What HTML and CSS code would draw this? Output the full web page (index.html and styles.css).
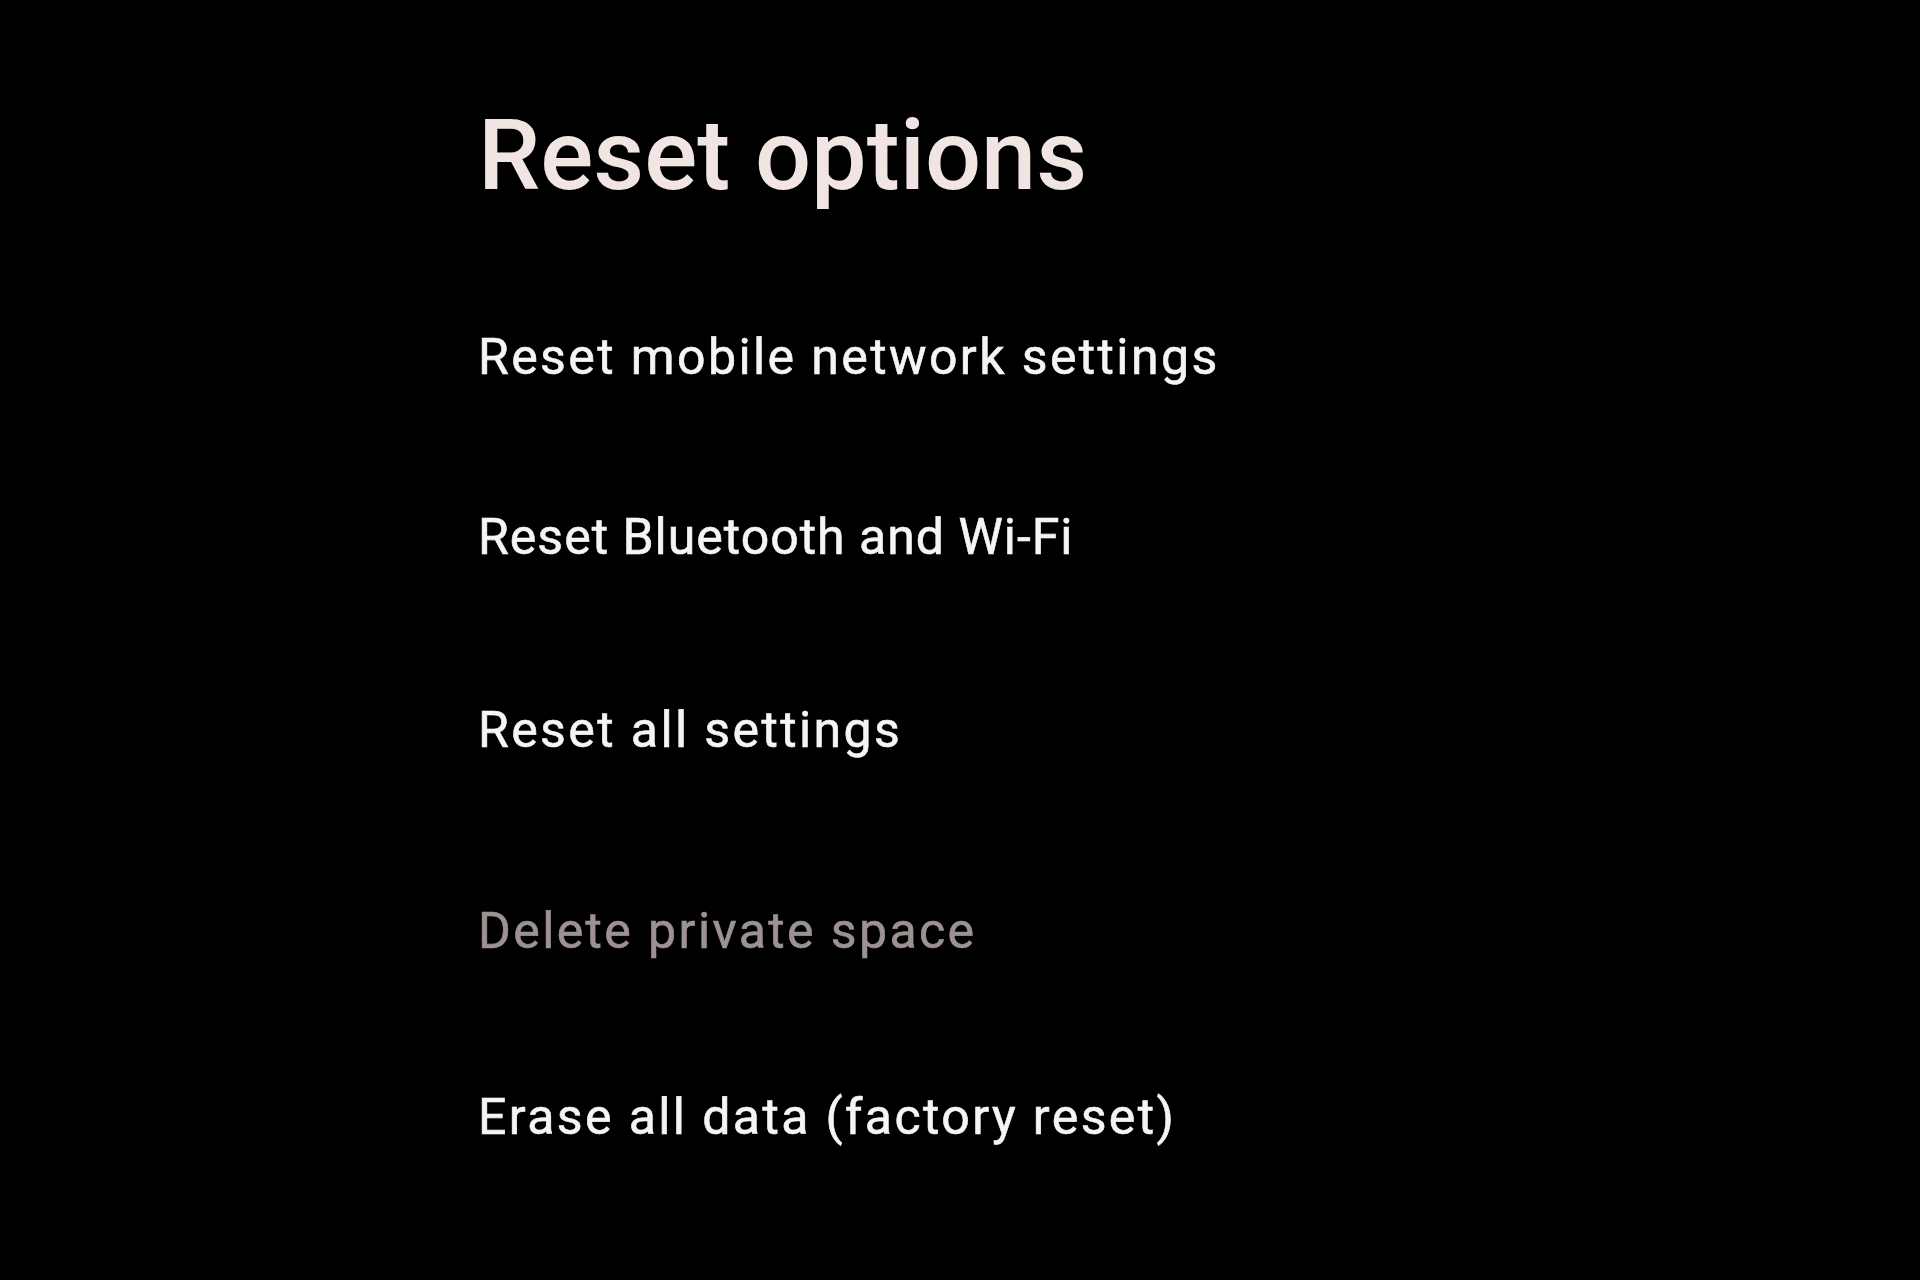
FILE: index.html
```html
<!DOCTYPE html>
<html lang="en">
<head>
    <meta charset="UTF-8">
    <meta name="viewport" content="width=device-width, initial-scale=1.0">
    <title>Reset options</title>
    <link rel="stylesheet" href="styles.css">
</head>
<body>
    <div class="screen">
        <h1 class="page-title">Reset options</h1>
        <div class="options">
            <a class="option" href="#">Reset mobile network settings</a>
            <a class="option option-narrow" href="#">Reset Bluetooth and Wi-Fi</a>
            <a class="option" href="#">Reset all settings</a>
            <a class="option option-disabled">Delete private space</a>
            <a class="option" href="#">Erase all data (factory reset)</a>
        </div>
    </div>
</body>
</html>
```

FILE: styles.css
```css
body {
    margin: 0;
    background-color: #000;
    font-family: Roboto, "Liberation Sans", sans-serif;
    color: #f4f2f2;
}
.screen {
    padding: 95px 0 0 478px;
}
.page-title {
    margin: 0;
    font-size: 99px;
    font-weight: 500;
    line-height: 120px;
    color: #f0e5e2;
}
.options {
    margin-top: 47px;
    display: flex;
    flex-direction: column;
}
.option {
    display: block;
    padding: 65px 0;
    font-size: 50px;
    font-weight: 400;
    line-height: 60px;
    letter-spacing: 2.4px;
    -webkit-text-stroke: 0.6px currentColor;
    color: #f6f4f4;
    text-decoration: none;
}
.option-narrow {
    padding-top: 55px;
    letter-spacing: 1px;
}
.option-narrow + .option {
    padding-top: 68px;
}
.option-disabled {
    padding-top: 76px;
    color: #9d9291;
}
.option-disabled + .option {
    padding-top: 61px;
}
```
